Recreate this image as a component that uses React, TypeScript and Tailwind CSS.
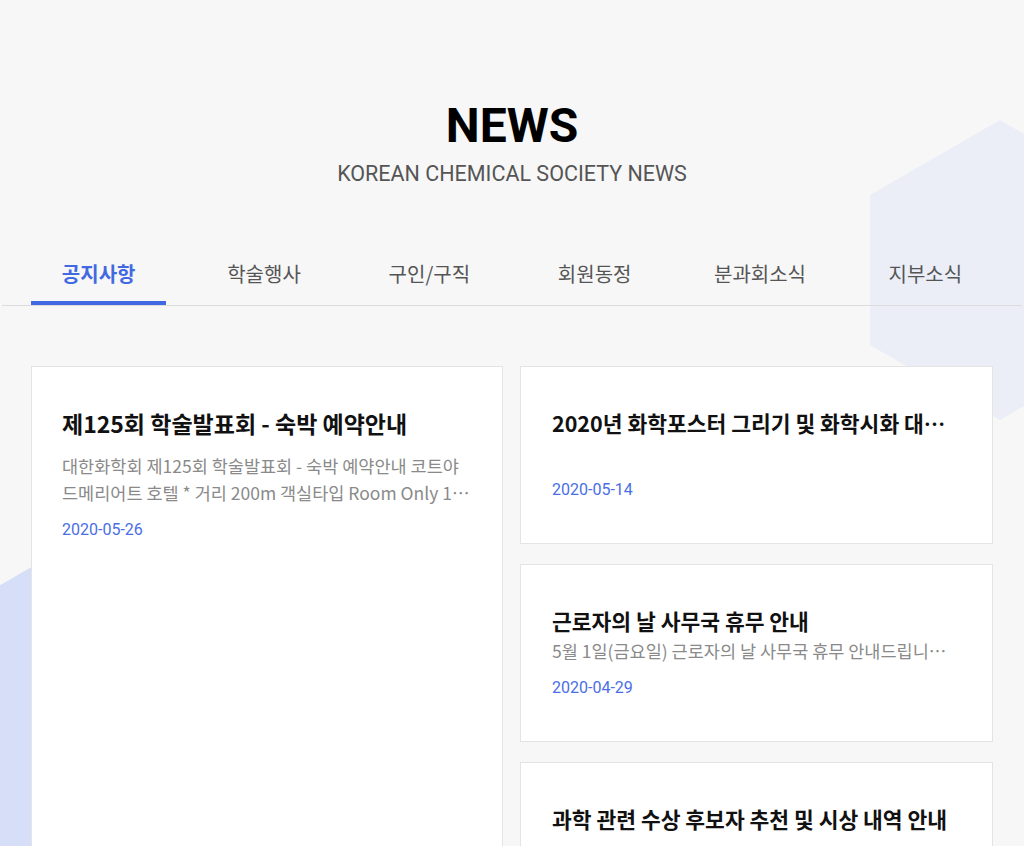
type news = {
    id: number,
    title: string,
    summary: string,
    date: string
}

const tabs = ['공지사항', '학술행사', '구인/구직', '회원동정', '분과회소식', '지부소식']

const featured: news = {
    id: 1,
    title: '제125회 학술발표회 - 숙박 예약안내',
    summary: '대한화학회 제125회 학술발표회 - 숙박 예약안내 코트야드메리어트 호텔 * 거리 200m 객실타입 Room Only 1박 요금 조식 포함',
    date: '2020-05-26'
}

const sideNews: news[] = [
    {id: 2, title: '2020년 화학포스터 그리기 및 화학시화 대회 수상자 발표', summary: '', date: '2020-05-14'},
    {id: 3, title: '근로자의 날 사무국 휴무 안내', summary: '5월 1일(금요일) 근로자의 날 사무국 휴무 안내드립니다. 업무에 참고하시기 바랍니다.', date: '2020-04-29'},
    {id: 4, title: '과학 관련 수상 후보자 추천 및 시상 내역 안내', summary: '', date: '2020-04-20'}
]

const Background = () => (
    <svg className="absolute inset-0" width="1024" height="846" viewBox="0 0 1024 846">
        <polygon points="1000,120 1130,195 1130,345 1000,420 870,345 870,195" fill="#ebeef7" />
        <polygon points="80,539 253,639 253,839 80,939 -93,839 -93,639" fill="#d6dff7" />
    </svg>
)

const SideCard = ({item}: {item: news}) => (
    <div className="h-[178px] bg-white border border-[#e4e4e4] px-[31px] pt-[40px]">
        <h3 className="truncate text-[21.5px] leading-[32px] font-bold text-[#111]">{item.title}</h3>
        <p className="h-[27px] truncate text-[17.5px] leading-[27px] text-[#8a8a8a]">{item.summary}</p>
        <span className="mt-[12px] block font-['Roboto',sans-serif] text-[16px] leading-[24px] text-[#4a6ee6]">{item.date}</span>
    </div>
)

export default function App() {
    return (
        <div className="relative h-[846px] w-full overflow-hidden bg-[#f7f7f7] font-['Noto_Sans_CJK_KR','Noto_Sans',sans-serif]">
            <Background />
            <div className="relative pt-[102px]">
                <h1 className="text-center font-['Roboto',sans-serif] text-[48px] leading-none font-bold text-black">NEWS</h1>
                <p className="mt-[13px] text-center font-['Roboto',sans-serif] text-[21.5px] leading-none text-[#555]">KOREAN CHEMICAL SOCIETY NEWS</p>

                <div className="mt-[59px] mx-auto w-[1020px] border-b border-[#dcdcdc]">
                    <ul className="mx-auto grid w-[992px] grid-cols-6">
                        {tabs.map((tab, i) => (
                            <li key={tab} className="px-[15px]">
                                <button className={i === 0
                                    ? "flex h-[61px] w-full items-center justify-center border-b-4 border-[#4169e1] pt-[3px] text-[20px] font-bold text-[#4169e1]"
                                    : "flex h-[61px] w-full items-center justify-center border-b-4 border-transparent pt-[3px] text-[20px] text-[#555]"}>
                                    {tab}
                                </button>
                            </li>
                        ))}
                    </ul>
                </div>

                <div className="mx-auto mt-[60px] flex w-[962px] gap-[17px]">
                    <div className="w-[472px] shrink-0 bg-white border border-[#e4e4e4] px-[30px] pt-[40px]">
                        <h3 className="truncate text-[23px] leading-[32px] font-bold text-[#111]">{featured.title}</h3>
                        <p className="mt-[13px] line-clamp-2 text-[17.5px] leading-[27px] text-[#8a8a8a]">{featured.summary}</p>
                        <span className="mt-[12px] block font-['Roboto',sans-serif] text-[16px] leading-[24px] text-[#4a6ee6]">{featured.date}</span>
                    </div>
                    <div className="flex w-[473px] flex-col gap-[20px]">
                        {sideNews.map(item => <SideCard key={item.id} item={item} />)}
                    </div>
                </div>
            </div>
        </div>
    )
}
